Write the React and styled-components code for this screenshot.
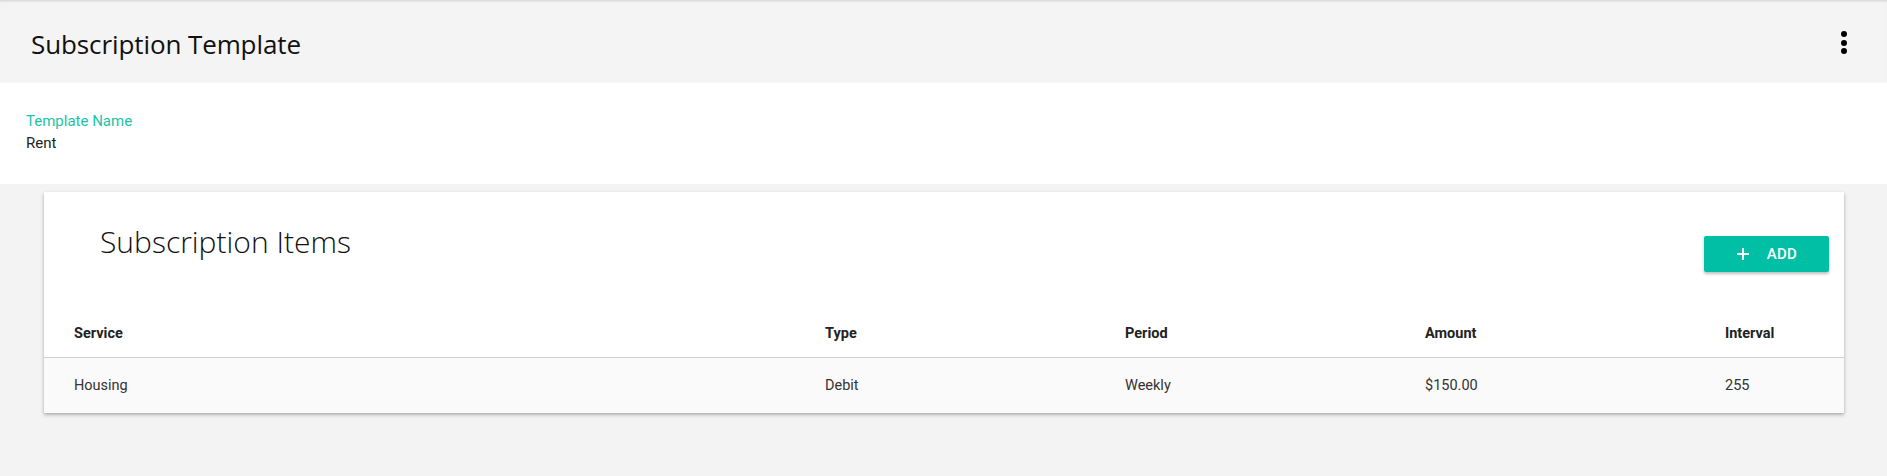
import React from "react";
import styled, { createGlobalStyle } from "styled-components";

const GlobalStyle = createGlobalStyle`
  html, body {
    margin: 0;
    padding: 0;
    background: #f3f3f3;
    font-family: Roboto, "Liberation Sans", sans-serif;
  }
  * { box-sizing: border-box; }
`;

const Page = styled.div`
  width: 1887px;
  min-height: 476px;
  background: #f3f3f3;
`;

const TopBar = styled.header`
  height: 82px;
  background: #f4f4f4;
  display: flex;
  align-items: center;
  justify-content: space-between;
  padding: 0 37px 0 31px;
  box-shadow: inset 0 3px 3px -2px rgba(0, 0, 0, 0.15);
`;

const Title = styled.h1`
  margin: 6px 0 0;
  font-family: "Open Sans", sans-serif;
  font-weight: 400;
  font-size: 26px;
  color: #111;
  letter-spacing: -0.1px;
`;

const MenuButton = styled.button`
  border: none;
  background: transparent;
  padding: 0;
  margin-top: 3px;
  width: 12px;
  display: flex;
  flex-direction: column;
  align-items: center;
  gap: 2.5px;
  cursor: pointer;
`;

const Dot = styled.span`
  width: 6px;
  height: 6px;
  border-radius: 50%;
  background: #000;
`;

const InfoSection = styled.section`
  background: #fff;
  border-top: 1px solid #f6f6f6;
  height: 102px;
  padding: 27px 26px 0;
`;

const FieldLabel = styled.div`
  color: #1cc3a7;
  font-size: 15px;
  line-height: 22px;
`;

const FieldValue = styled.div`
  color: #222;
  font-size: 15px;
  line-height: 22px;
`;

const Card = styled.div`
  margin: 8px 43px 0 44px;
  background: #fff;
  box-shadow: 0 2px 4px rgba(0, 0, 0, 0.22), 0 1px 2px rgba(0, 0, 0, 0.12);
`;

const CardHead = styled.div`
  display: flex;
  justify-content: space-between;
  align-items: flex-start;
  padding: 29px 15px 0 56px;
  height: 117px;
`;

const CardTitle = styled.h2`
  margin: 0;
  font-family: "Open Sans", sans-serif;
  font-weight: 300;
  font-size: 30px;
  color: #111;
`;

const AddButton = styled.button`
  margin-top: 15px;
  width: 125px;
  height: 36px;
  border: none;
  border-radius: 2px;
  background: #00bfa5;
  color: #fff;
  font-family: Roboto, sans-serif;
  font-weight: 500;
  font-size: 15px;
  letter-spacing: 0.3px;
  display: flex;
  align-items: center;
  justify-content: center;
  gap: 17px;
  box-shadow: 0 2px 3px rgba(0, 0, 0, 0.25);
  cursor: pointer;
`;

const Row = styled.div`
  display: grid;
  grid-template-columns: 751px 300px 300px 300px 1fr;
  align-items: center;
  padding-left: 30px;
  height: ${(p) => (p.head ? "48px" : "56px")};
  background: ${(p) => (p.head ? "#fff" : "#fafafa")};
  border-top: ${(p) => (p.head ? "none" : "1px solid #d2d2d2")};
`;

const Cell = styled.div`
  font-size: 14.5px;
  color: ${(p) => (p.head ? "#222" : "#333")};
  font-weight: ${(p) => (p.head ? 700 : 400)};
`;

const columns = ["Service", "Type", "Period", "Amount", "Interval"];
const items = [
  { service: "Housing", type: "Debit", period: "Weekly", amount: "$150.00", interval: "255" },
];

function PlusIcon() {
  return (
    <svg width="14" height="14" viewBox="0 0 14 14">
      <path d="M7 1v12M1 7h12" stroke="#fff" strokeWidth="2" />
    </svg>
  );
}

export default function App() {
  return (
    <Page>
      <GlobalStyle />
      <TopBar>
        <Title>Subscription Template</Title>
        <MenuButton aria-label="More">
          <Dot />
          <Dot />
          <Dot />
        </MenuButton>
      </TopBar>
      <InfoSection>
        <FieldLabel>Template Name</FieldLabel>
        <FieldValue>Rent</FieldValue>
      </InfoSection>
      <Card>
        <CardHead>
          <CardTitle>Subscription Items</CardTitle>
          <AddButton>
            <PlusIcon />
            ADD
          </AddButton>
        </CardHead>
        <Row head>
          {columns.map((c) => (
            <Cell head key={c}>{c}</Cell>
          ))}
        </Row>
        {items.map((it) => (
          <Row key={it.service}>
            <Cell>{it.service}</Cell>
            <Cell>{it.type}</Cell>
            <Cell>{it.period}</Cell>
            <Cell>{it.amount}</Cell>
            <Cell>{it.interval}</Cell>
          </Row>
        ))}
      </Card>
    </Page>
  );
}
